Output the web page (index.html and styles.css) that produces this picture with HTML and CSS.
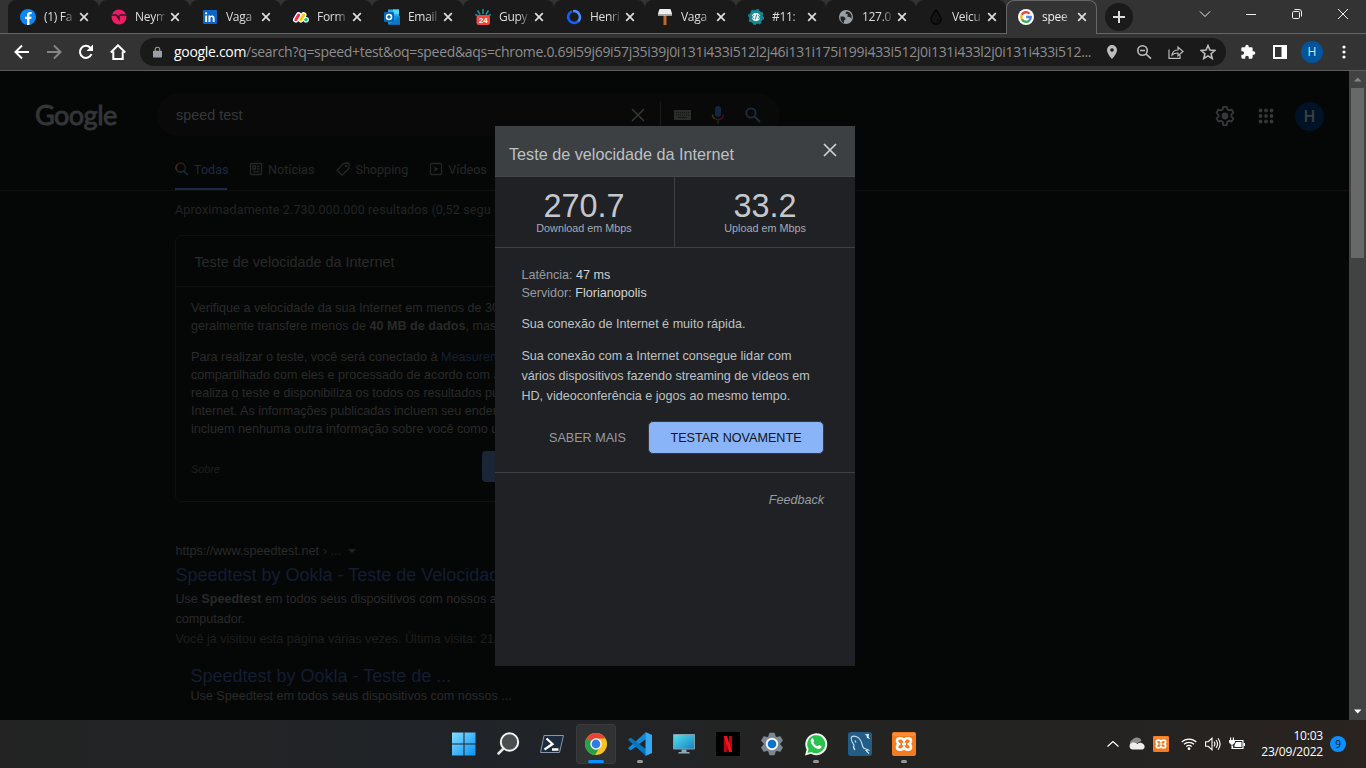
FILE: index.html
```html
<!DOCTYPE html>
<html lang="pt-BR">
<head>
<meta charset="utf-8">
<title>speed test - Pesquisa Google</title>
<link rel="stylesheet" href="styles.css">
</head>
<body>
<svg class="defs" width="0" height="0" aria-hidden="true">
  <symbol id="x" viewBox="0 0 10 10"><path d="M1.2 1.2 8.8 8.8M8.8 1.2 1.2 8.8" stroke="currentColor" stroke-width="1.7" fill="none"/></symbol>
  <symbol id="xampp" viewBox="0 0 24 24"><rect width="24" height="24" rx="2" fill="#f47b20"/><path d="M1 1h22v3H1z" fill="#f99a50" opacity=".6"/><path d="M12 8.500C10.500 5.500 5 5.500 5 9c0 2 1 2.200 2 3-1 .8-2 1-2 3 0 3.500 5.500 3.500 7 .5 1.500 3 7 3 7-.5 0-2-1-2.200-2-3 1-.8 2-1 2-3 0-3.500-5.500-3.500-7-.5zM10 12h4" fill="none" stroke="#fff" stroke-width="2.600"/></symbol>
</svg>
<div class="tabs">
  <div class="tab first"><svg class="fav" viewBox="0 0 16 16"><circle cx="8" cy="8" r="8" fill="#0a86f5"/><path d="M7 16V10H5V7.700h2V6c0-2 1.200-3.100 3-3.100l1.700.1v2h-1c-1 0-1.300.5-1.300 1.200v1.500h2.200L11.200 10H9.400v6z" fill="#fff"/></svg><span>(1) Fa</span><svg class="x"><use href="#x"/></svg></div>
  <div class="tab"><svg class="fav" viewBox="0 0 16 16"><circle cx="8" cy="8" r="7.500" fill="#e91e63"/><path d="M0 6h5.500l2.500 4V7l1.500-1H16" stroke="#32182a" stroke-width="1.500" fill="none"/></svg><span>Neym</span><svg class="x"><use href="#x"/></svg></div>
  <div class="tab"><svg class="fav" viewBox="0 0 16 16"><rect x="1" y="1" width="14" height="14" rx="1" fill="#0a66c2"/><path d="M3.200 6.500h1.900V13H3.200zM6.500 6.500h1.800v.9c.9-1.500 4.300-1.600 4.300 1.600v4h-1.900V9.500c0-2-2.300-1.800-2.300 0V13H6.500z" fill="#fff"/><circle cx="4.150" cy="4.300" r="1.150" fill="#fff"/></svg><span>Vaga</span><svg class="x"><use href="#x"/></svg></div>
  <div class="tab"><svg class="fav" viewBox="0 0 16 16"><path d="M2.800 10.700 5.700 6M7.800 10.700 10.700 6M13 10.700h.1" stroke="#fff" stroke-width="5.600" stroke-linecap="round"/><path d="M2.800 10.700 5.700 6" stroke="#f62b54" stroke-width="3" stroke-linecap="round"/><path d="M7.800 10.700 10.700 6" stroke="#fc0" stroke-width="3" stroke-linecap="round"/><circle cx="13" cy="10.700" r="1.800" fill="#00ca72"/></svg><span>Form</span><svg class="x"><use href="#x"/></svg></div>
  <div class="tab"><svg class="fav" viewBox="0 0 16 16"><path d="M4 .5h11V7H4z" fill="#28a8ea"/><path d="M9 .5h6V5H9z" fill="#50d9ff"/><path d="M4 7h12v8.500H4z" fill="#1490df"/><path d="m5 15.500 11-8v8z" fill="#0a78c8"/><rect y="3" width="10" height="10" rx="1" fill="#0868b8"/><circle cx="5" cy="8" r="2.500" fill="none" stroke="#fff" stroke-width="1.500"/></svg><span>Email</span><svg class="x"><use href="#x"/></svg></div>
  <div class="tab"><svg class="fav" viewBox="0 0 16 16"><path d="M8 0v5M2.500 1.500l2.700 4M13.500 1.500l-2.700 4M.2 5.500l3 1.500M15.800 5.500l-3 1.500" stroke="#1793a5" stroke-width="1.500"/><rect x="1.500" y="6" width="13.500" height="10" rx="2.500" fill="#f4473e"/><text x="8.200" y="14.300" text-anchor="middle" class="cal">24</text></svg><span>Gupy</span><svg class="x"><use href="#x"/></svg></div>
  <div class="tab"><svg class="fav" viewBox="0 0 16 16"><path d="M6 2.300A6 6 0 1 0 12 12.500" fill="none" stroke="#1260ff" stroke-width="2.500"/><path d="M7 2.200a6 6 0 0 1 5 10.300" fill="none" stroke="#4d8dff" stroke-width="2.500"/></svg><span>Henri</span><svg class="x"><use href="#x"/></svg></div>
  <div class="tab"><svg class="fav" viewBox="0 0 16 16"><path d="M6.500 5h3v11h-3z" fill="#b86b30"/><path d="M2.500 0h11l1.500 4.500v2H1v-2z" fill="#eee"/><path d="M1 5h14v1.500H1z" fill="#aaa"/></svg><span>Vaga</span><svg class="x"><use href="#x"/></svg></div>
  <div class="tab short"><svg class="fav" viewBox="0 0 16 16"><circle cx="8" cy="8" r="5.500" fill="#fff" stroke="#178a96" stroke-width="3"/><circle cx="8" cy="8" r="7.300" fill="none" stroke="#178a96" stroke-width="1.400" stroke-dasharray="2.870"/><path d="m6.200 6-2 2 2 2M9.800 6l2 2-2 2M8.600 5.500l-1.200 5" fill="none" stroke="#178a96"/></svg><span>#11:</span><svg class="x"><use href="#x"/></svg></div>
  <div class="tab short"><svg class="fav" viewBox="0 0 16 16"><circle cx="8" cy="8" r="7" fill="#9aa0a6"/><path d="M2.500 7.500h3l2 1.500v1.500l-1.500 1v2.500C4 13.500 2 11 2.500 7.500zM8 2.500l-.5 2 2.500 1-1 2 3 .8 1.500 1.500C14.500 6 12 2.500 8 2.500z" fill="#242526"/></svg><span>127.0</span><svg class="x"><use href="#x"/></svg></div>
  <div class="tab short"><svg class="fav" viewBox="0 0 16 16"><path d="M8 1C6 4 3 7 3 10.300a5 5 0 0 0 10 0C13 7 10 4 8 1z" fill="#141414" stroke="#050505" stroke-width="1.500"/><path d="M10.500 10a2.500 2.500 0 0 1-2 2.500" stroke="#000" fill="none"/></svg><span>Veicu</span><svg class="x"><use href="#x"/></svg></div>
  <div class="tab active"><svg class="fav" viewBox="0 0 16 16"><circle cx="8" cy="8" r="8" fill="#fff"/><g fill="none" stroke-width="2.300"><path d="M11.500 4.700A4.800 4.800 0 0 0 3.800 5.700" stroke="#ea4335"/><path d="M3.800 5.700a4.800 4.800 0 0 0 0 4.600" stroke="#fbbc05"/><path d="M3.800 10.300a4.800 4.800 0 0 0 7.400 1.300" stroke="#34a853"/><path d="M11.200 11.600A4.600 4.600 0 0 0 12.800 8H8.200" stroke="#4285f4"/></g></svg><span>spee</span><svg class="x"><use href="#x"/></svg></div>
  <div class="plus"><svg width="12" height="12" viewBox="0 0 12 12"><path d="M6 0v12M0 6h12" stroke="#ddd" stroke-width="2"/></svg></div>
  <div class="winctl">
    <svg viewBox="0 0 12 12"><path d="m1 3.500 5 5 5-5" /></svg>
    <svg viewBox="0 0 12 12"><path d="M1 6.500h10"/></svg>
    <svg viewBox="0 0 12 12"><rect x="1.500" y="3.500" width="7" height="7" rx="1.200"/><path d="M3.500 1.500H8a2.500 2.500 0 0 1 2.500 2.500v4.500"/></svg>
    <svg viewBox="0 0 12 12"><path d="m1 1 10 10M11 1 1 11"/></svg>
  </div>
</div>
<div class="toolbar">
  <div class="nav">
    <svg viewBox="0 0 16 16"><path d="M15 8H2M8 1.500 1.500 8 8 14.500"/></svg>
    <svg class="off" viewBox="0 0 16 16"><path d="M1 8h13M8 1.500 14.500 8 8 14.500"/></svg>
    <svg viewBox="0 0 16 16"><path d="M13.500 10.200A6 6 0 1 1 12.300 3.700L14 5.500"/><path d="M15 .5V7H8.500z" fill="#fff" stroke="none"/></svg>
    <svg viewBox="0 0 16 16"><path d="M.8 8.500 8 1.300l7.200 7.200M3.300 7.500v7.600h9.400V7.500"/></svg>
  </div>
  <div class="omni">
    <svg class="lock" viewBox="0 0 10 12"><path d="M1 4.500h8a1 1 0 0 1 1 1V11a1 1 0 0 1-1 1H1a1 1 0 0 1-1-1V5.500a1 1 0 0 1 1-1z" fill="#9aa0a6"/><path d="M2.500 5V3a2.500 2.200 0 0 1 5 0v2" fill="none" stroke="#9aa0a6" stroke-width="1.200"/></svg>
    <div class="url"><b>google.com</b>/search?q=speed+test&amp;oq=speed&amp;aqs=chrome.0.69i59j69i57j35i39j0i131i433i512l2j46i131i175i199i433i512j0i131i433l2j0i131i433i512...</div>
    <div class="oicons">
      <svg viewBox="0 0 16 16"><path d="M8 1a5 5 0 0 0-5 5c0 3.700 5 9 5 9s5-5.300 5-9a5 5 0 0 0-5-5zm0 6.800A1.800 1.800 0 1 1 8 4.200a1.800 1.800 0 0 1 0 3.600z" fill="#bdbdbd"/></svg>
      <svg viewBox="0 0 16 16" class="st"><circle cx="6.500" cy="6.500" r="4.700"/><path d="m10 10 5 4.700M4 6.500h5"/></svg>
      <svg viewBox="0 0 16 16" class="st thin"><path d="M1 5.500v8.800h11V11M4 11c.5-3.500 2.500-5 6-5V3l5 4.500-5 4.200V9C7.500 9 5.500 9.500 4 11z"/></svg>
      <svg viewBox="0 0 16 16" class="st"><path d="m8 1.500 1.900 4.600 4.900.4-3.700 3.200 1.100 4.800L8 11.900l-4.200 2.600 1.100-4.800L1.200 6.500l4.900-.4z"/></svg>
    </div>
  </div>
  <div class="ext">
    <svg viewBox="0 0 24 24"><path fill="#fff" d="M20.500 11H19V7a2 2 0 0 0-2-2h-4V3.500a2.500 2.500 0 0 0-5 0V5H4a2 2 0 0 0-2 2v3.800h1.500a2.700 2.700 0 0 1 0 5.400H2V20a2 2 0 0 0 2 2h3.800v-1.500a2.700 2.700 0 0 1 5.400 0V22H17a2 2 0 0 0 2-2v-4h1.500a2.500 2.500 0 0 0 0-5z"/></svg>
    <svg viewBox="0 0 16 16"><path fill="#fff" d="M1 1h14v14H1zM3 3v10h6.500V3z" fill-rule="evenodd"/></svg>
    <div class="avatar">H</div>
    <svg viewBox="0 0 16 16" fill="#fff"><circle cx="8" cy="3" r="1.600"/><circle cx="8" cy="8" r="1.600"/><circle cx="8" cy="13" r="1.600"/></svg>
  </div>
</div>
<div class="view">
  <main class="page">
    <header class="head">
      <div class="logo">Google</div>
      <div class="search"><span>speed test</span>
        <svg class="clr" viewBox="0 0 14 14"><path d="m1 1 12 12M13 1 1 13" stroke="#353636" stroke-width="1.500"/></svg>
        <i></i>
        <svg class="kb" viewBox="0 0 17 10"><path d="M0 0h17v10H0z" fill="#2a2b2b"/><path d="M2 2.500h13M2 5h13" stroke="#161616" stroke-dasharray="1 1"/><path d="M4 7.500h9" stroke="#161616"/></svg>
        <svg class="mic" viewBox="0 0 14 20"><rect x="4" y="1" width="6" height="11" rx="3" fill="#102645"/><path d="M1.500 9.500c0 2 1 3.500 2.500 4.300" stroke="#41330a" stroke-width="1.600" fill="none"/><path d="M4 13.800c4 2 8.500 0 8.500-4.300" stroke="#401310" stroke-width="1.600" fill="none"/><path d="M7 15v4" stroke="#0e2c18" stroke-width="1.600"/></svg>
        <svg class="mag" viewBox="0 0 16 16"><circle cx="6" cy="6" r="4.700" fill="none" stroke="#1d2b42" stroke-width="1.800"/><path d="m9.500 9.500 5.500 5.500" stroke="#1d2b42" stroke-width="2"/></svg>
      </div>
      <div class="acct">
        <svg width="22" height="22" viewBox="0 0 24 24"><path fill="none" stroke="#353738" stroke-width="2" stroke-linejoin="round" d="M10 2h4l.5 2.800 2 1.100 2.700-1 2 3.500-2.200 1.800v2.600l2.200 1.800-2 3.500-2.700-1-2 1.100L14 22h-4l-.5-3.800-2-1.100-2.700 1-2-3.500L5 12.800v-1.600L2.800 8.400l2-3.500 2.700 1 2-1.100z"/><circle cx="12" cy="12" r="3.700" fill="#353738"/></svg>
        <svg width="16" height="16" viewBox="0 0 16 16" fill="#353738"><circle cx="2.500" cy="2.500" r="1.900"/><circle cx="8" cy="2.500" r="1.900"/><circle cx="13.500" cy="2.500" r="1.900"/><circle cx="2.500" cy="8" r="1.900"/><circle cx="8" cy="8" r="1.900"/><circle cx="13.500" cy="8" r="1.900"/><circle cx="2.500" cy="13.500" r="1.900"/><circle cx="8" cy="13.500" r="1.900"/><circle cx="13.500" cy="13.500" r="1.900"/></svg>
        <div class="me">H</div>
      </div>
    </header>
    <nav class="cats">
      <a class="on"><svg viewBox="0 0 14 14" fill="none" stroke-width="1.500"><path d="M2 8.500A4.500 4.500 0 0 1 2 3" stroke="#40340c"/><path d="M2 3a4.500 4.500 0 0 1 7-.5" stroke="#421411"/><path d="M9 2.500a4.500 4.500 0 0 1-1 7.200" stroke="#14271d"/><path d="M2 8.500c1.500 2 5 2 6.500.5l4.500 4" stroke="#1b2b48"/></svg>Todas</a>
      <a class="c2"><svg viewBox="0 0 14 14" fill="none" stroke="#252627" stroke-width="1.300"><rect x="1.500" y="1.500" width="11" height="11" rx="1"/><path d="M4 4h2.500v3H4zM8 4.500h2.500M8 7h2.500M4 9.700h6.500"/></svg>Notícias</a>
      <a class="c3"><svg viewBox="0 0 14 14" fill="none" stroke="#252627" stroke-width="1.300"><path d="m7.500 1.500 5-.5.5 1v4.500l-7 6.700L1 8.300z"/><circle cx="10" cy="4" r=".6"/></svg>Shopping</a>
      <a class="c4"><svg viewBox="0 0 14 14" fill="none" stroke="#252627" stroke-width="1.300"><rect x="1.500" y="1.500" width="11" height="11" rx="1"/><path d="m5.500 4.500 4 2.500-4 2.500z" fill="#252627" stroke="none"/></svg>Vídeos</a>
    </nav>
    <p class="stats">Aproximadamente 2.730.000.000 resultados (0,52 segu</p>
    <section class="card">
      <h2>Teste de velocidade da Internet</h2>
      <div class="cbody">
        <p>Verifique a velocidade da sua Internet em menos de 30<br>geralmente transfere menos de <b>40 MB de dados</b>, mas</p>
        <p>Para realizar o teste, você será conectado à <a>Measurem</a><br>compartilhado com eles e processado de acordo com a<br>realiza o teste e disponibiliza os todos os resultados pu<br>Internet. As informações publicadas incluem seu ender<br>incluem nenhuma outra informação sobre você como u</p>
        <div class="foot"><em>Sobre</em><span></span></div>
      </div>
    </section>
    <article class="result">
      <div class="site">https://www.speedtest.net <small>› ...</small><u></u></div>
      <h3>Speedtest by Ookla - Teste de Velocidad</h3>
      <p>Use <b>Speedtest</b> em todos seus dispositivos com nossos a<br>computador.</p>
      <p class="dim">Você já visitou esta página várias vezes. Última visita: 21/</p>
      <div class="sub"><h3>Speedtest by Ookla - Teste de ...</h3><p>Use Speedtest em todos seus dispositivos com nossos ...</p></div>
    </article>
  </main>
  <div class="scroll"><svg viewBox="0 0 17 17"><path d="M5 10.500h7.500L8.700 6.500z" fill="#868686"/></svg><div class="thumb"></div><svg class="dn" viewBox="0 0 17 17"><path d="M5 6.500h7.500l-3.800 4z" fill="#fff"/></svg></div>
  <div class="modal">
    <div class="mhead"><span>Teste de velocidade da Internet</span><svg viewBox="0 0 14 14"><path d="m1 1 12 12M13 1 1 13" stroke="#d0d1d2" stroke-width="1.700"/></svg></div>
    <div class="nums"><div><strong>270.7</strong><span>Download em Mbps</span></div><div><strong>33.2</strong><span>Upload em Mbps</span></div></div>
    <div class="mbody">
      <div class="kv">Latência: <b>47 ms</b><br>Servidor: <b>Florianopolis</b></div>
      <p class="fast">Sua conexão de Internet é muito rápida.</p>
      <p class="desc">Sua conexão com a Internet consegue lidar com<br>vários dispositivos fazendo streaming de vídeos em<br>HD, videoconferência e jogos ao mesmo tempo.</p>
      <div class="btns"><span>SABER MAIS</span><button>TESTAR NOVAMENTE</button></div>
    </div>
    <div class="fb">Feedback</div>
  </div>
</div>
<div class="task">
  <div class="apps">
    <div><svg viewBox="0 0 24 24"><defs><linearGradient id="w" x2="1" y2="1"><stop stop-color="#83dcff"/><stop offset="1" stop-color="#0a93f5"/></linearGradient></defs><path fill="url(#w)" d="M0 .5h11.500v11H0zM12.500.5h11v11h-11zM0 12.500h11.500v11H0zM12.500 12.500h11v11h-11z"/></svg></div>
    <div><svg viewBox="0 0 24 24"><circle cx="13.500" cy="10" r="8.700" fill="#4b4d4f" stroke="#f3f3f3" stroke-width="2"/><path d="m7.500 16.500-5 5" stroke="#e5e5e5" stroke-width="2.500" stroke-linecap="round"/></svg></div>
    <div><svg viewBox="0 0 24 24"><path d="M4 3.500h19.500l-4 17H.5z" fill="#1d2b3f" stroke="#8796ab"/><path d="m6.500 6.500 6 5.500-8 5.500M12 17.500h6.500" fill="none" stroke="#fff" stroke-width="2.300"/></svg></div>
    <div class="cur"><svg viewBox="0 0 24 24"><circle cx="12" cy="12" r="11" fill="#fcc31e"/><path d="M12 12 2.500 6.500A11 11 0 0 1 21.500 6.500H12z" fill="#ea4335"/><path d="m12 12-9.500-5.500A11 11 0 0 0 11 23l5.500-9z" fill="#26a148"/><circle cx="12" cy="12" r="5.700" fill="#fff"/><circle cx="12" cy="12" r="4.400" fill="#2b7de9"/></svg></div>
    <div class="run"><svg viewBox="0 0 24 24"><path d="M18 7 2.500 18.500 0 16.200 17.500.5z" fill="#118ade"/><path d="M18 17 2.500 5.500 0 7.800 17.500 23.500z" fill="#0874bd"/><path d="m17.500 0 6.500 3v18l-6.500 3z" fill="#32a9f2"/></svg></div>
    <div><svg viewBox="0 0 24 24"><defs><linearGradient id="m" x2="1" y2="1"><stop stop-color="#55e3e6"/><stop offset="1" stop-color="#167fc9"/></linearGradient></defs><path d="M1.500 2.500h21V17h-21z" fill="url(#m)" stroke="#7fa1ad"/><path d="M9.500 17.500h5V20h3v1.500h-11V20h3z" fill="#8caab9"/></svg></div>
    <div><svg viewBox="0 0 24 24"><path d="M0 0h24v24H0z" fill="#000"/><path d="M8 4h3v16H8zM13 4h3v16h-3z" fill="#b90710"/><path d="M8 4h3l5 16h-3z" fill="#f31320"/></svg></div>
    <div><svg viewBox="0 0 24 24"><g fill="#7d878f"><path id="t" d="M9.500.8h5L16 5v14l-1.500 4.200h-5L8 19V5z"/><use href="#t" transform="rotate(60 12 12)"/><use href="#t" transform="rotate(120 12 12)"/></g><circle cx="12" cy="12" r="8" fill="#7d878f"/><circle cx="12" cy="12" r="6.200" fill="#f3f3f3"/><circle cx="12" cy="12" r="4.300" fill="#0873ca"/></svg></div>
    <div class="run"><svg viewBox="0 0 24 24"><path d="M1 23.500 2.600 17.500A11 11 0 1 1 6.800 21.800z" fill="#f5f5f5"/><path d="m3.500 21 1.100-4A9 9 0 1 1 7.600 19.900z" fill="#27c34a"/><path d="M7.600 6.800C8.300 6 9 6.200 9.300 6.900l.8 1.900c.2.600-.9 1.200-.7 1.700.8 1.700 2.100 2.900 3.900 3.700.6.200 1.300-1.500 1.900-1.200l2 1c.8.400.2 2-1 2.600-2 .9-4.700-.3-6.600-2.200-2.500-2.400-3.900-5.700-2-7.600z" fill="#fff"/></svg></div>
    <div><svg viewBox="0 0 24 24"><rect width="24" height="24" rx="3" fill="#225d87"/><path d="M7 18c-1-1-2-3-1-5C4 10 2 6 4 4.500c2-1 6 0 8 3 2 2.500 2 6 3.500 8.500l5 2-2.500.5 3 3M7 8.500l1 2" fill="none" stroke="#d4e4ef" stroke-width="1.100"/><path d="m16.500 2.500 2 1 .5 2.500L22 7l-1.500-2.500L21 2z" fill="#e7f4ff"/></svg></div>
    <div class="run"><svg><use href="#xampp"/></svg></div>
  </div>
  <div class="tray">
    <svg class="up" viewBox="0 0 14 14"><path d="m1.500 9.500 5.500-5 5.500 5" fill="none" stroke="#fff" stroke-width="1.200"/></svg>
    <svg class="cloud" viewBox="0 0 18 14"><path d="M4 9.500a4 4 0 0 1 1-7.300 5 5 0 0 1 8.500 1.500z" fill="#8b8b8b"/><path d="M4 12.500a3.500 3.500 0 0 1-.5-6.500c2.500-1 4.500 0 6 1 3-3 8 .5 7 3.500-.5 1.500-1.500 2-3 2z" fill="#eee"/></svg>
    <svg class="xm"><use href="#xampp"/></svg>
    <svg class="wifi" viewBox="0 0 16 14"><g fill="none" stroke="#fff" stroke-width="1.200"><path d="M.7 5a10.500 10.500 0 0 1 14.600 0M3 7.300a7.200 7.200 0 0 1 10 0M5.300 9.500a4 4 0 0 1 5.400 0"/></g><circle cx="8" cy="11.700" r="1.400" fill="#fff"/></svg>
    <svg class="vol" viewBox="0 0 16 14"><g fill="none" stroke="#fff" stroke-width="1.100"><path d="M.6 4.700h2.600L7 1.200v11.600L3.200 9.300H.6zM9 4.700q1.800 2.300 0 4.600M11 3q3 4 0 8M13 1.200q4.200 5.800 0 11.600"/></g></svg>
    <svg class="bat" viewBox="0 0 16 14"><path d="M6 3.500h8v8H3.500V9" fill="none" stroke="#fff" stroke-width="1.200"/><path d="M7 5h5.500v5H5.500V8zM14.500 6H16v3h-1.500zM0 3h6v2.500L4 7.500H2L0 5.500zM1 .5h1.200V3H1zM3.800.5H5V3H3.800zM2.500 7h1v5h-1z" fill="#fff"/></svg>
    <div class="clock">10:03<br>23/09/2022</div>
    <div class="badge">9</div>
  </div>
</div>
</body>
</html>
```
FILE: styles.css
```css
* { box-sizing: border-box; }
body { margin: 0; width: 1366px; height: 768px; overflow: hidden; display: flex; flex-direction: column; background: #333; font-family: "Liberation Sans", Arial, sans-serif; }
p, h2, h3 { margin: 0; font-weight: normal; }
svg { display: block; flex: none; }
.defs { position: absolute; }

/* Tab strip */
.tabs { height: 34px; flex: none; display: flex; padding-left: 8px; border-bottom: 1px solid #666; font: 12px "Open Sans", "Noto Sans", sans-serif; color: #ddd; }
.tab { width: 91px; flex: none; height: 33px; background: #1a1a1a; border-radius: 8px 8px 0 0; display: flex; align-items: center; padding: 0 0 0 12px; position: relative; }
.tab.short { width: 90px; }
.tab::after { content: ""; position: absolute; right: -1px; top: 8px; width: 1px; height: 19px; background: #5a5a5a; }
.tab:nth-child(11)::after, .tab.active::after { display: none; }
.fav { width: 16px; height: 16px; }
.tab span { width: 30px; margin-left: 8px; overflow: hidden; white-space: nowrap; line-height: 18px; letter-spacing: -.3px; -webkit-mask-image: linear-gradient(90deg, #000 65%, rgba(0,0,0,.15)); }
.tab .x { width: 10px; height: 10px; margin-left: 5px; color: #ddd; }
.tab.active { height: 34px; background: #333; border: 1px solid #666; border-bottom: 0; color: #eee; padding-left: 11px; padding-bottom: 1px; }
.cal { font: bold 8px "Liberation Sans"; fill: #fff; }
.plus { width: 28px; height: 28px; margin: 3px 0 0 8px; border-radius: 50%; background: #1a1a1a; display: grid; place-items: center; }
.winctl { margin-left: auto; display: flex; gap: 34px; padding: 8px 17px 0 0; }
.winctl svg { width: 12px; height: 12px; fill: none; stroke: #eee; stroke-width: 1; }

/* Toolbar */
.toolbar { height: 37px; flex: none; display: flex; align-items: center; border-bottom: 1px solid #5c5c5c; padding: 0 14px; }
.nav { display: flex; gap: 16px; width: 126px; }
.nav svg { width: 16px; height: 16px; fill: none; stroke: #fff; stroke-width: 2; }
.nav .off { stroke: #858585; }
.omni { width: 1086px; height: 28px; border-radius: 14px; background: #1a1a1a; display: flex; align-items: center; padding: 0 10px 0 13px; }
.lock { width: 9px; height: 12px; }
.url { margin-left: 12px; font: 14px/20px "Open Sans", "Noto Sans", sans-serif; letter-spacing: -.31px; color: #8d8d8d; white-space: nowrap; width: 924px; }
.url b { color: #fff; font-weight: 400; }
.oicons { margin-left: auto; display: flex; gap: 16px; }
.oicons svg { width: 16px; height: 16px; }
.st { fill: none; stroke: #bdbdbd; stroke-width: 1.600; }
.thin { stroke-width: 1.200; }
.ext { margin-left: auto; display: flex; gap: 13px; align-items: center; }
.ext svg { width: 16px; height: 16px; }
.ext svg:nth-child(2) { margin-left: 3px; }
.avatar { width: 22px; height: 22px; border-radius: 50%; background: #00559c; color: #dce8f5; font: 12px/22px "Open Sans", sans-serif; text-align: center; }

/* Page below the dimming layer */
.view { position: relative; height: 649px; flex: none; display: flex; background: #050706; overflow: hidden; color: #292a2a; }
.page { width: 1349px; }
.head { display: flex; height: 65px; padding: 23px 25px 0 35px; }
.logo { width: 122px; font: 27px/42px Lato, sans-serif; letter-spacing: -.5px; color: #333536; -webkit-text-stroke: .9px #333536; }
.search { width: 623px; height: 42px; border-radius: 21px; background: #090909; display: flex; align-items: center; padding-left: 19px; }
.search span { font: 14.400px "Liberation Sans", sans-serif; color: #373838; width: 455px; }
.search i { width: 1px; height: 26px; background: #191a1a; margin: 0 13px 0 15px; }
.clr { width: 14px; height: 14px; }
.kb { width: 17px; height: 10px; }
.mic { width: 14px; height: 20px; margin-left: 20px; }
.mag { width: 16px; height: 16px; margin-left: 20px; }
.acct { margin-left: auto; display: flex; align-items: center; height: 44px; }
.acct svg:nth-child(2) { margin: 0 21px 0 22px; }
.me { width: 29px; height: 29px; border-radius: 50%; background: #001326; color: #3c4044; font: 500 16px/29px Roboto, sans-serif; text-align: center; }
.cats { display: flex; height: 55px; border-bottom: 1px solid #0e1010; padding-left: 175px; font: 12.600px Roboto, sans-serif; color: #252627; }
.cats a { display: flex; align-items: center; gap: 5px; height: 54px; padding-top: 12px; white-space: nowrap; }
.cats svg { width: 14px; height: 14px; }
.cats .on { color: #1d2a44; border-bottom: 2px solid #1d2a44; padding-top: 14px; width: 52px; }
.c2 { margin-left: 22px; } .c3 { margin-left: 22px; } .c4 { margin-left: 21px; }
.stats { padding-left: 175px; margin-top: 10px; font: 12.600px/18px Roboto, sans-serif; letter-spacing: .1px; color: #222324; white-space: nowrap; }
.card { margin: 16px 0 0 175px; width: 587px; height: 267px; border: 1px solid #0f1111; border-radius: 7px; font-size: 12.600px; line-height: 18px; }
.card h2 { height: 51px; border-bottom: 1px solid #0f1111; padding-left: 18.400px; font-size: 14.400px; line-height: 52px; }
.cbody { padding: 12px 0 0 15px; }
.cbody p { margin-bottom: 13px; white-space: nowrap; }
.cbody a { color: #151f35; }
.foot { display: flex; align-items: center; height: 31px; }
.foot em { font-size: 10.800px; color: #1d1e1e; width: 291px; padding-top: 4px; }
.foot span { width: 80px; height: 31px; border-radius: 4px; background: #1c2536; }
.result { margin: 39px 0 0 175.400px; font-size: 12.600px; line-height: 20px; white-space: nowrap; }
.site { height: 20px; display: flex; align-items: center; gap: 4px; }
.site small { font-size: 12.600px; color: #202121; }
.site u { border: 4px solid transparent; border-top-color: #202121; border-bottom: 0; margin-left: 3px; }
h3 { font-size: 18px; line-height: 24px; height: 24px; color: #141d32; }
.result > h3 { margin: 2px 0; }
.result .dim { color: #1d1e1e; }
.sub { padding: 15px 0 0 15px; }
.sub h3 { height: 23px; }
.sub p { line-height: 19px; }

.scroll { width: 17px; background: #424242; }
.scroll svg { width: 17px; height: 17px; }
.thumb { margin: 0 2px; height: 170px; background: #686868; }
.scroll .dn { margin-top: 445px; }

/* Speed test dialog */
.modal { position: absolute; left: 495px; top: 55px; width: 360px; height: 540px; background: #202124; color: #bdc1c6; font-size: 12.600px; }
.mhead { height: 51px; background: #3c4043; border-bottom: 1px solid #45484b; display: flex; justify-content: space-between; padding: 18px 18px 0 14px; font-size: 16.200px; line-height: 21px; }
.mhead svg { width: 14px; height: 14px; margin-top: -1px; }
.nums { display: flex; height: 71px; border-bottom: 1px solid #3c4043; text-align: center; }
.nums div { width: 180px; padding-top: 11px; }
.nums div:first-child { border-right: 1px solid #3c4043; padding-right: 1px; }
.nums strong { display: block; font-size: 32.400px; font-weight: 400; line-height: 36px; color: #c4c7cb; }
.nums span { display: block; font-size: 10.800px; line-height: 10px; color: #a4abb4; margin-top: -1px; }
.mbody { height: 225px; border-bottom: 1px solid #3c4043; padding: 18px 31px 0 26.400px; white-space: nowrap; }
.kv { line-height: 18px; color: #969ba1; }
.kv b { font-weight: 400; color: #d0d2d5; }
.fast { margin-top: 12px; line-height: 20px; }
.desc { margin-top: 12px; line-height: 20px; }
.btns { display: flex; justify-content: flex-end; align-items: center; gap: 22px; margin-top: 15px; color: #969ba1; }
.btns button { width: 176px; height: 33px; border: 1px solid #34373c; border-radius: 5px; padding: 0; background: #8ab4f8; color: #111216; font: 12.600px "Liberation Sans", sans-serif; }
.fb { padding: 18px 31px 0 0; text-align: right; font-style: italic; line-height: 18px; color: #969ba1; }

/* Windows taskbar */
.task { height: 48px; flex: none; display: flex; background: linear-gradient(90deg, #232323, #202428 35%, #232323 55%, #242322 80%, #2a231f); }
.apps { display: flex; gap: 4px; padding: 4px 0 0 444px; }
.apps div { width: 40px; height: 40px; border-radius: 4px; display: grid; place-items: center; position: relative; }
.apps svg { width: 24px; height: 24px; }
.apps .cur { background: #303234; box-shadow: inset 0 0 0 1px #393b3d; }
.apps .cur::after, .apps .run::after { content: ""; position: absolute; left: 12px; bottom: 1px; width: 16px; height: 3px; border-radius: 2px; background: #0a8fff; }
.apps .run::after { left: 17px; width: 6px; background: #999; }
.tray { margin-left: auto; display: flex; align-items: center; padding-right: 20px; }
.tray svg { width: 16px; height: 14px; }
.tray .up { width: 14px; margin-right: 8px; }
.tray .cloud { width: 18px; margin-right: 7px; }
.tray .xm { height: 16px; margin-right: 12px; }
.tray .wifi { margin-right: 8px; }
.tray .vol { margin-right: 8px; }
.clock { width: 78px; text-align: right; color: #fff; font: 12px/16px "Open Sans", sans-serif; letter-spacing: -.2px; margin-right: 7px; }
.badge { width: 16px; height: 16px; border-radius: 50%; background: #0a8fff; color: #111; font: 10px/16px "Open Sans", sans-serif; text-align: center; }
```
